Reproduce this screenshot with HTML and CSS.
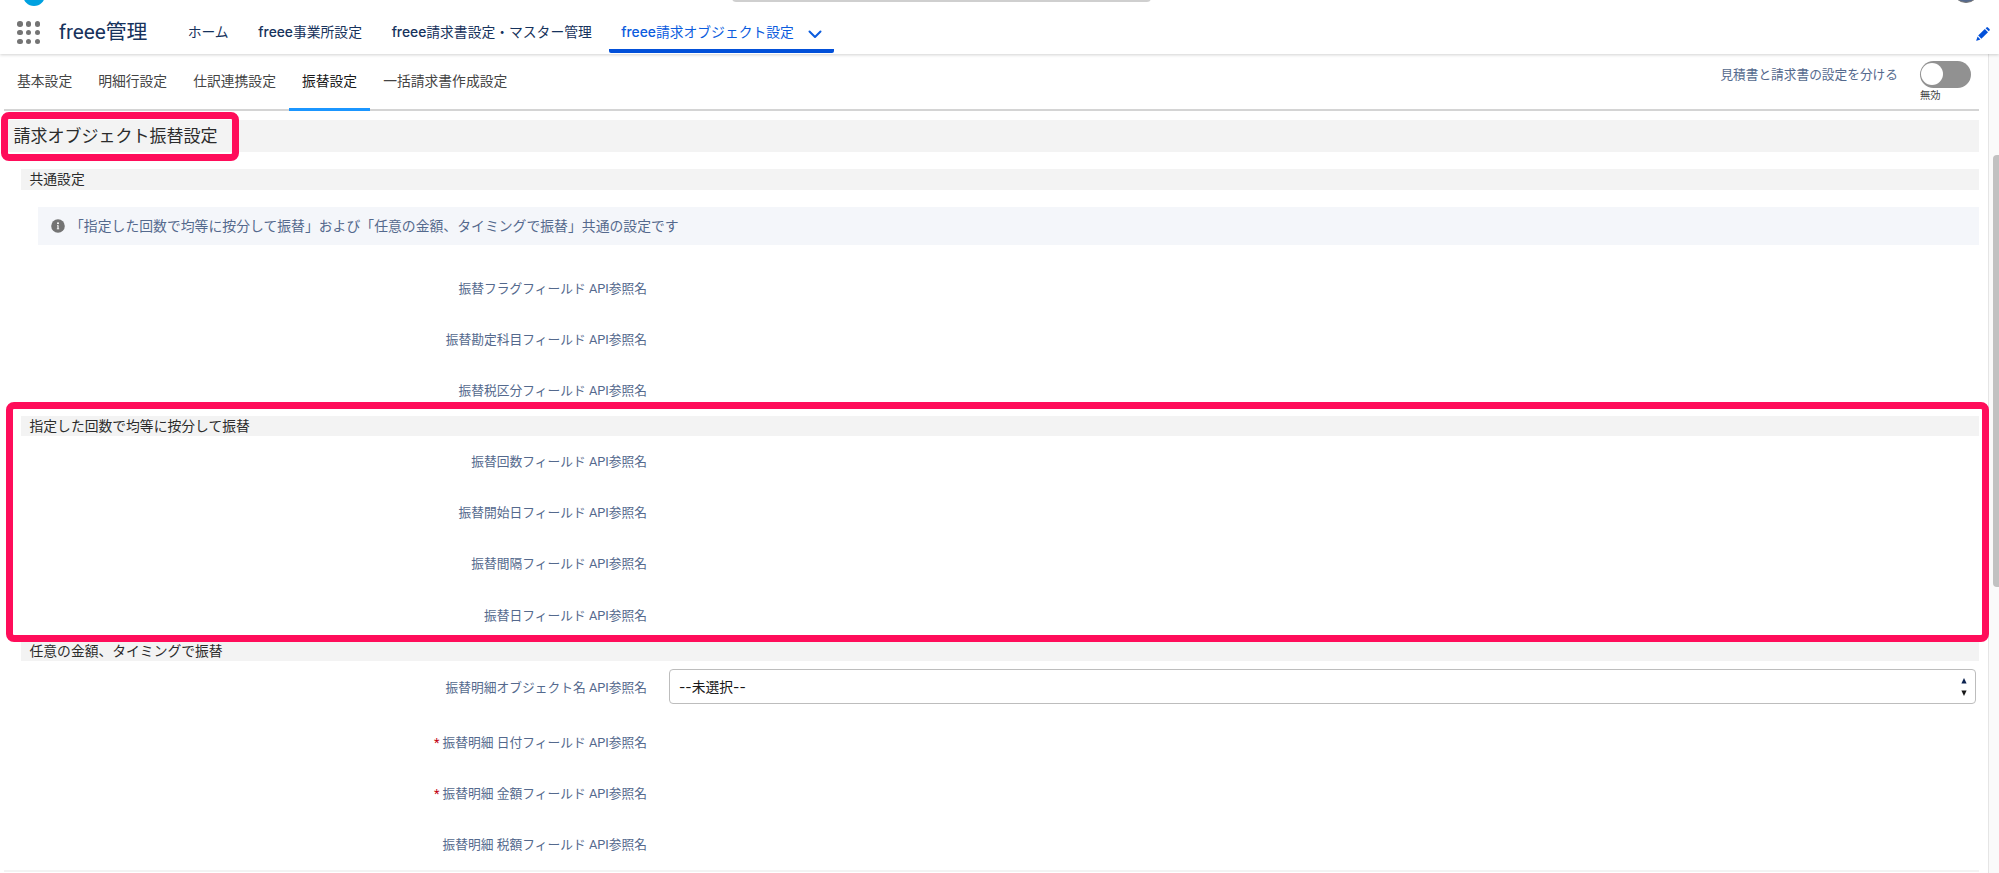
FILE: index.html
```
<!DOCTYPE html>
<html lang="ja">

<head>
    <meta charset="UTF-8">
    <meta name="viewport" content="width=device-width, initial-scale=1.0">
    <title>freee管理</title>
    <link rel="stylesheet" href="styles.css">
</head>

<body>
    <div class="header">
        <div class="logo"></div>
        <div class="search"></div>
        <div class="avatar"></div>
        <div class="launcher">
            <i></i><i></i><i></i>
            <i></i><i></i><i></i>
            <i></i><i></i><i></i>
        </div>
        <div class="app-name">freee管理</div>
        <div class="nav">
            <a class="nav-item">ホーム</a>
            <a class="nav-item"><b>freee</b>事業所設定</a>
            <a class="nav-item"><b>freee</b>請求書設定・マスター管理</a>
            <a class="nav-item current"><b>freee</b>請求オブジェクト設定
                <svg class="chevron" width="14" height="9" viewBox="0 0 14 9">
                    <path d="M1.5 1.5L7 7L12.5 1.5" fill="none" stroke="#0b5cde" stroke-width="2" stroke-linecap="round" stroke-linejoin="round" />
                </svg>
            </a>
        </div>
        <svg class="pencil" width="14" height="14" viewBox="0 0 14 14">
            <path d="M2.2 8.6L8.8 2L12 5.2L5.4 11.8Z" fill="#0250d9" />
            <path d="M9.6 1.2L10.5 0.4Q11.2 -0.2 11.9 0.4L13.5 2Q14.1 2.8 13.5 3.5L12.8 4.3Z" fill="#0250d9" />
            <path d="M1.6 9.6L4.4 12.4L0.7 13.7Q0.1 13.8 0.3 13.2Z" fill="#0250d9" />
        </svg>
    </div>

    <div class="main">
        <div class="page">
            <div class="tabs">
                <div class="tab">基本設定</div>
                <div class="tab">明細行設定</div>
                <div class="tab">仕訳連携設定</div>
                <div class="tab active">振替設定</div>
                <div class="tab">一括請求書作成設定</div>
                <div class="toggle-label">見積書と請求書の設定を分ける</div>
                <div class="toggle">
                    <div class="switch"></div>
                    <div class="state">無効</div>
                </div>
            </div>

            <div class="title">請求オブジェクト振替設定</div>

            <div class="sub-title">共通設定</div>
            <div class="info">
                <svg width="14" height="14" viewBox="0 0 14 14">
                    <circle cx="7" cy="7" r="6.8" fill="#747474" />
                    <circle cx="7" cy="4.2" r="1" fill="#fff" />
                    <path d="M6 6.2H7.6V9.4H8.2V10.2H5.8V9.4H6.4V7H6Z" fill="#fff" />
                </svg>
                <span>「指定した回数で均等に按分して振替」および「任意の金額、タイミングで振替」共通の設定です</span>
            </div>
            <div class="row">振替フラグフィールド API参照名</div>
            <div class="row">振替勘定科目フィールド API参照名</div>
            <div class="row">振替税区分フィールド API参照名</div>

            <div class="sub-title">指定した回数で均等に按分して振替</div>
            <div class="row">振替回数フィールド API参照名</div>
            <div class="row">振替開始日フィールド API参照名</div>
            <div class="row">振替間隔フィールド API参照名</div>
            <div class="row">振替日フィールド API参照名</div>

            <div class="sub-title">任意の金額、タイミングで振替</div>
            <div class="row select-row">
                <span>振替明細オブジェクト名 API参照名</span>
                <div class="select">
                    <span>--未選択--</span>
                    <svg width="6" height="20" viewBox="0 0 6 20">
                        <path d="M3 1L5.6 6.4H0.4Z" fill="#0d2350" />
                        <path d="M0.4 13.4H5.6L3 19Z" fill="#181818" />
                    </svg>
                </div>
            </div>
            <div class="row"><b>*</b>振替明細 日付フィールド API参照名</div>
            <div class="row"><b>*</b>振替明細 金額フィールド API参照名</div>
            <div class="row">振替明細 税額フィールド API参照名</div>
            <div class="footer-line"></div>
        </div>
        <div class="scroll">
            <div class="thumb"></div>
        </div>
    </div>

    <!-- 強調枠 -->
    <div class="mark mark-title"></div>
    <div class="mark mark-section"></div>
</body>

</html>
```

FILE: styles.css
```
* {
    margin: 0;
    padding: 0;
    box-sizing: border-box;
}

body {
    width: 1999px;
    height: 873px;
    position: relative;
    overflow: hidden;
    background-color: #fff;
    font-family: Roboto, "Noto Sans CJK JP", sans-serif;
    font-size: 13.8px;
    color: #2b2b2b;
    white-space: nowrap;
}

.header {
    height: 54px;
    position: relative;
    z-index: 2;
    display: flex;
    align-items: flex-start;
    padding-left: 17px;
    background-color: #fff;
    box-shadow: 0 1px 3px rgba(0, 0, 0, 0.18);
}

.logo {
    width: 22px;
    height: 22px;
    border-radius: 50%;
    background-color: #00a1e0;
    position: absolute;
    left: 23px;
    top: -16px;
}

.search {
    width: 419px;
    height: 12px;
    border: 2px solid #cfcfcf;
    border-radius: 4px;
    position: absolute;
    left: 732px;
    top: -10px;
}

.avatar {
    width: 28px;
    height: 28px;
    border: 1px solid #777;
    border-radius: 50%;
    background-color: #54698d;
    position: absolute;
    left: 1952px;
    top: -25px;
}

.launcher {
    display: grid;
    grid-template-columns: repeat(3, 5.6px);
    gap: 3.2px;
    margin-top: 21px;
}

.launcher i {
    width: 5.6px;
    height: 5.6px;
    border-radius: 50%;
    background-color: #747474;
}

.app-name {
    width: 111px;
    margin-left: 18.5px;
    font-size: 20.8px;
    line-height: 65px;
    color: #16325c;
}

.nav {
    display: flex;
    margin-left: 6px;
    font-family: Inter, "Noto Sans CJK JP", sans-serif;
    line-height: 64px;
    color: #16325c;
}

.nav b {
    font-weight: 500;
}

.nav-item {
    height: 53px;
    padding: 0 13.5px 0 16.2px;
}

.nav-item:first-child {
    padding-left: 12px;
}

.nav-item.current {
    width: 225px;
    margin-left: 4px;
    padding: 0 0 0 12px;
    color: #0b5cde;
    border-bottom: 4px solid #0250d9;
    border-radius: 2px;
}

.chevron {
    margin-left: 10px;
    vertical-align: -2px;
}

.pencil {
    position: absolute;
    left: 1976px;
    top: 27px;
}

.main {
    display: flex;
    height: 819px;
}

.page {
    width: 1989px;
    padding: 0 9px 0 4px;
    border-right: 1px solid #e5e5e5;
    border-top-left-radius: 10px;
}

.tabs {
    display: flex;
    height: 57px;
    border-bottom: 2px solid #d4d4d4;
    line-height: 54px;
    color: #444;
}

.tab {
    height: 57px;
    padding: 0 13px;
}

.tab.active {
    color: #181818;
    border-bottom: 3px solid #1b96ff;
}

.toggle-label {
    margin-left: auto;
    font-size: 12.7px;
    line-height: 42px;
    color: #54698d;
}

.toggle {
    width: 51px;
    margin: 7px 8px 0 22px;
}

.switch {
    width: 51px;
    height: 27px;
    padding: 2px 1px;
    border-radius: 14px;
    background-color: #919191;
}

.switch::before {
    content: "";
    display: block;
    width: 22px;
    height: 22px;
    border-radius: 50%;
    background-color: #fff;
}

.state {
    font-size: 10.3px;
    line-height: 15px;
}

.title {
    height: 32px;
    margin-top: 9px;
    padding-left: 9.5px;
    background-color: #f3f3f3;
    font-size: 17px;
    line-height: 32px;
}

.sub-title {
    height: 20.5px;
    margin-left: 16.5px;
    padding-left: 9px;
    background-color: #f3f3f3;
    line-height: 20px;
}

.title + .sub-title {
    margin-top: 17px;
}

.info {
    height: 38px;
    margin: 17.5px 0;
    margin-left: 34px;
    display: flex;
    align-items: center;
    padding-left: 13px;
    background-color: #f4f6fa;
    color: #54698d;
}

.info span {
    margin-left: 5px;
    padding-bottom: 2px;
    font-size: 13.85px;
}

.row {
    width: 643px;
    height: 51.1px;
    padding-top: 1px;
    font-size: 12.75px;
    line-height: 49px;
    color: #54698d;
    text-align: right;
}

.row b {
    margin-right: 3px;
    font-weight: 400;
    color: #c2000f;
}

.select-row {
    width: auto;
    height: 55.5px;
    padding-top: 2px;
    display: flex;
    justify-content: flex-end;
}

.select {
    width: 1307px;
    height: 35px;
    margin: 6px 3px 0 22px;
    display: flex;
    align-items: center;
    justify-content: space-between;
    padding: 0 8px 0 9px;
    border: 1.5px solid #bdbdbd;
    border-radius: 4px;
    font-family: Inter, "Noto Sans CJK JP", sans-serif;
    font-size: 13.8px;
    line-height: 32px;
    color: #181818;
}

.footer-line {
    height: 2px;
    background-color: #f3f3f3;
}

.scroll {
    flex: 1;
    padding: 101px 0 0 4px;
    background-color: #fafafa;
}

.thumb {
    height: 432px;
    background-color: #c1c1c1;
    border-radius: 4px 0 0 4px;
}

/* 強調枠 */
.mark {
    position: absolute;
    border: 7px solid #ff0d5a;
    border-radius: 8px;
    z-index: 3;
}

.mark-title {
    left: 1px;
    top: 112px;
    width: 238px;
    height: 49px;
}

.mark-section {
    left: 6px;
    top: 402px;
    width: 1983px;
    height: 240px;
}
```
